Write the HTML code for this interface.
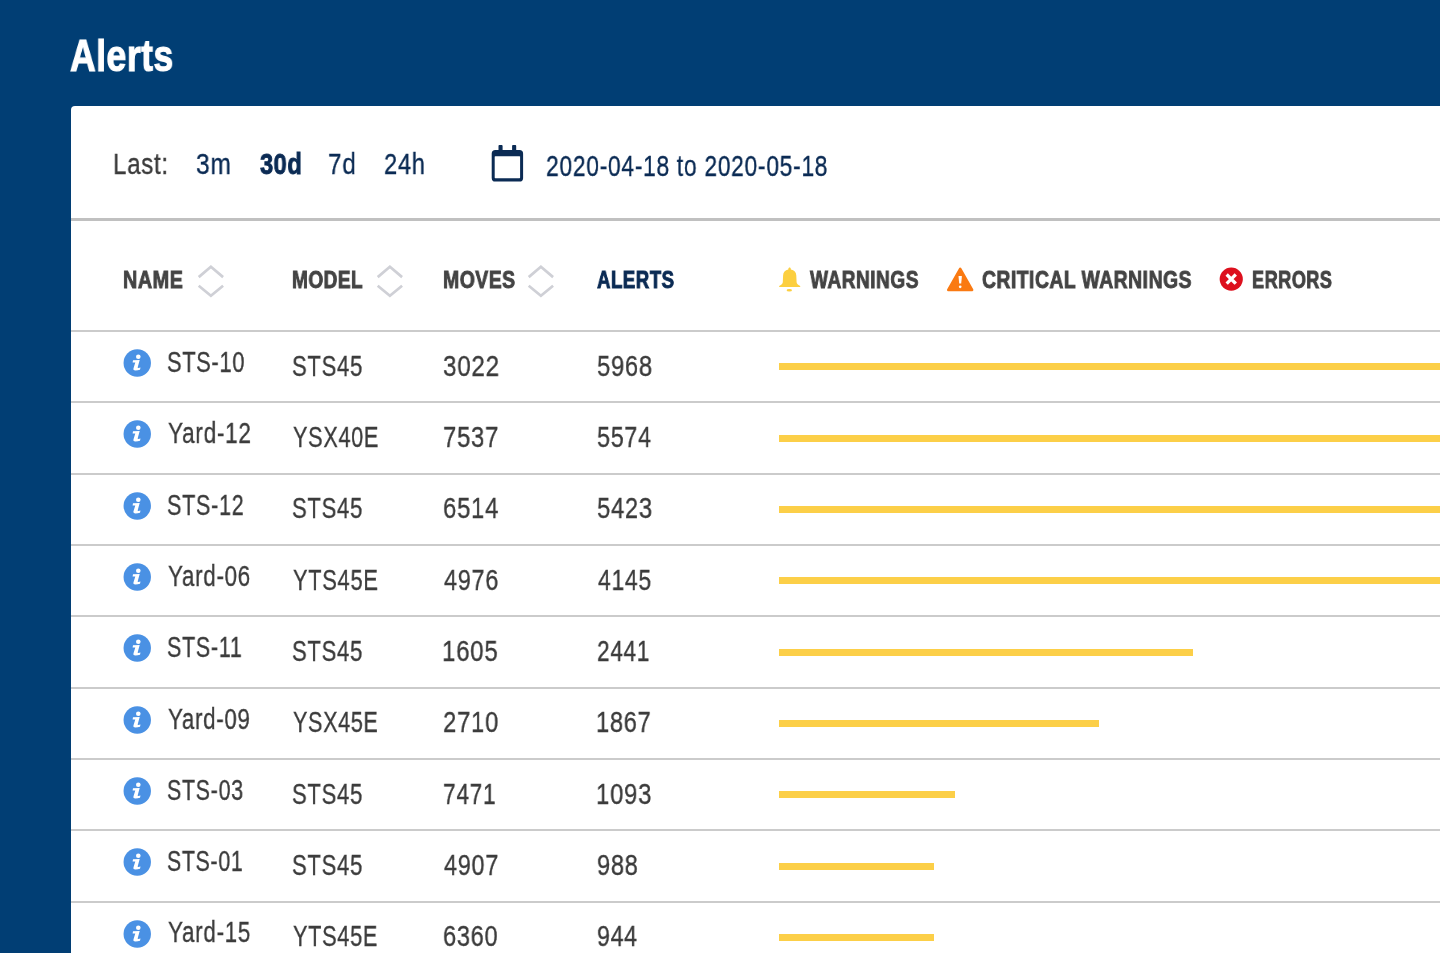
<!DOCTYPE html><html><head><meta charset="utf-8"><style>
html,body{margin:0;padding:0;}
body{width:1440px;height:953px;overflow:hidden;background:#013e74;position:relative;font-family:"Liberation Sans",sans-serif;}
.t{position:absolute;white-space:nowrap;line-height:1;transform-origin:0 0;will-change:transform;}
.ic{position:absolute;overflow:visible;}
.card{position:absolute;left:71px;top:106px;width:1400px;height:900px;background:#fff;border-radius:4px;}
.sep{position:absolute;left:71px;width:1400px;}
.bar{position:absolute;left:779px;height:7px;background:#fccf48;}
</style></head><body>
<div class="card"></div>
<div class="sep" style="top:217.5px;height:3px;background:#c0c0c0"></div>

<div class="sep" style="top:329.90px;height:2px;background:#cbcbcb"></div>
<div class="sep" style="top:401.23px;height:2px;background:#cbcbcb"></div>
<div class="sep" style="top:472.56px;height:2px;background:#cbcbcb"></div>
<div class="sep" style="top:543.89px;height:2px;background:#cbcbcb"></div>
<div class="sep" style="top:615.22px;height:2px;background:#cbcbcb"></div>
<div class="sep" style="top:686.55px;height:2px;background:#cbcbcb"></div>
<div class="sep" style="top:757.88px;height:2px;background:#cbcbcb"></div>
<div class="sep" style="top:829.21px;height:2px;background:#cbcbcb"></div>
<div class="sep" style="top:900.54px;height:2px;background:#cbcbcb"></div>
<div class="bar" style="top:363.30px;width:721px"></div>
<svg class="ic" style="left:117px;top:343.00px" width="40" height="40" viewBox="0 0 40 40"><circle cx="20.25" cy="20" r="13.7" fill="#4a91e4"/><circle cx="21.3" cy="13.7" r="2.3" fill="#fff"/><path d="M16.0,17.3 L22.7,17.0 L20.7,24.2 Q20.5,25.0 21.3,24.9 L23.5,24.6 L23.0,26.7 Q21.0,27.4 18.4,27.4 Q15.9,27.4 16.5,25.2 L18.3,19.5 L15.6,19.6 Z" fill="#fff"/></svg>
<div class="bar" style="top:434.63px;width:721px"></div>
<svg class="ic" style="left:117px;top:414.33px" width="40" height="40" viewBox="0 0 40 40"><circle cx="20.25" cy="20" r="13.7" fill="#4a91e4"/><circle cx="21.3" cy="13.7" r="2.3" fill="#fff"/><path d="M16.0,17.3 L22.7,17.0 L20.7,24.2 Q20.5,25.0 21.3,24.9 L23.5,24.6 L23.0,26.7 Q21.0,27.4 18.4,27.4 Q15.9,27.4 16.5,25.2 L18.3,19.5 L15.6,19.6 Z" fill="#fff"/></svg>
<div class="bar" style="top:505.96px;width:721px"></div>
<svg class="ic" style="left:117px;top:485.66px" width="40" height="40" viewBox="0 0 40 40"><circle cx="20.25" cy="20" r="13.7" fill="#4a91e4"/><circle cx="21.3" cy="13.7" r="2.3" fill="#fff"/><path d="M16.0,17.3 L22.7,17.0 L20.7,24.2 Q20.5,25.0 21.3,24.9 L23.5,24.6 L23.0,26.7 Q21.0,27.4 18.4,27.4 Q15.9,27.4 16.5,25.2 L18.3,19.5 L15.6,19.6 Z" fill="#fff"/></svg>
<div class="bar" style="top:577.29px;width:721px"></div>
<svg class="ic" style="left:117px;top:556.99px" width="40" height="40" viewBox="0 0 40 40"><circle cx="20.25" cy="20" r="13.7" fill="#4a91e4"/><circle cx="21.3" cy="13.7" r="2.3" fill="#fff"/><path d="M16.0,17.3 L22.7,17.0 L20.7,24.2 Q20.5,25.0 21.3,24.9 L23.5,24.6 L23.0,26.7 Q21.0,27.4 18.4,27.4 Q15.9,27.4 16.5,25.2 L18.3,19.5 L15.6,19.6 Z" fill="#fff"/></svg>
<div class="bar" style="top:648.62px;width:414px"></div>
<svg class="ic" style="left:117px;top:628.32px" width="40" height="40" viewBox="0 0 40 40"><circle cx="20.25" cy="20" r="13.7" fill="#4a91e4"/><circle cx="21.3" cy="13.7" r="2.3" fill="#fff"/><path d="M16.0,17.3 L22.7,17.0 L20.7,24.2 Q20.5,25.0 21.3,24.9 L23.5,24.6 L23.0,26.7 Q21.0,27.4 18.4,27.4 Q15.9,27.4 16.5,25.2 L18.3,19.5 L15.6,19.6 Z" fill="#fff"/></svg>
<div class="bar" style="top:719.95px;width:320px"></div>
<svg class="ic" style="left:117px;top:699.65px" width="40" height="40" viewBox="0 0 40 40"><circle cx="20.25" cy="20" r="13.7" fill="#4a91e4"/><circle cx="21.3" cy="13.7" r="2.3" fill="#fff"/><path d="M16.0,17.3 L22.7,17.0 L20.7,24.2 Q20.5,25.0 21.3,24.9 L23.5,24.6 L23.0,26.7 Q21.0,27.4 18.4,27.4 Q15.9,27.4 16.5,25.2 L18.3,19.5 L15.6,19.6 Z" fill="#fff"/></svg>
<div class="bar" style="top:791.28px;width:175.5px"></div>
<svg class="ic" style="left:117px;top:770.98px" width="40" height="40" viewBox="0 0 40 40"><circle cx="20.25" cy="20" r="13.7" fill="#4a91e4"/><circle cx="21.3" cy="13.7" r="2.3" fill="#fff"/><path d="M16.0,17.3 L22.7,17.0 L20.7,24.2 Q20.5,25.0 21.3,24.9 L23.5,24.6 L23.0,26.7 Q21.0,27.4 18.4,27.4 Q15.9,27.4 16.5,25.2 L18.3,19.5 L15.6,19.6 Z" fill="#fff"/></svg>
<div class="bar" style="top:862.61px;width:155px"></div>
<svg class="ic" style="left:117px;top:842.31px" width="40" height="40" viewBox="0 0 40 40"><circle cx="20.25" cy="20" r="13.7" fill="#4a91e4"/><circle cx="21.3" cy="13.7" r="2.3" fill="#fff"/><path d="M16.0,17.3 L22.7,17.0 L20.7,24.2 Q20.5,25.0 21.3,24.9 L23.5,24.6 L23.0,26.7 Q21.0,27.4 18.4,27.4 Q15.9,27.4 16.5,25.2 L18.3,19.5 L15.6,19.6 Z" fill="#fff"/></svg>
<div class="bar" style="top:933.94px;width:155px"></div>
<svg class="ic" style="left:117px;top:913.64px" width="40" height="40" viewBox="0 0 40 40"><circle cx="20.25" cy="20" r="13.7" fill="#4a91e4"/><circle cx="21.3" cy="13.7" r="2.3" fill="#fff"/><path d="M16.0,17.3 L22.7,17.0 L20.7,24.2 Q20.5,25.0 21.3,24.9 L23.5,24.6 L23.0,26.7 Q21.0,27.4 18.4,27.4 Q15.9,27.4 16.5,25.2 L18.3,19.5 L15.6,19.6 Z" fill="#fff"/></svg>
<svg class="ic" style="left:196.8px;top:258px" width="34" height="46" viewBox="0 0 34 46"><polyline points="1.7,19.1 13.9,8.8 26.1,19.1" fill="none" stroke="#cfd0d6" stroke-width="2.7"/><polyline points="1.7,27.7 13.9,37.8 26.1,27.7" fill="none" stroke="#cfd0d6" stroke-width="2.7"/></svg>
<svg class="ic" style="left:375.7px;top:258px" width="34" height="46" viewBox="0 0 34 46"><polyline points="1.7,19.1 13.9,8.8 26.1,19.1" fill="none" stroke="#cfd0d6" stroke-width="2.7"/><polyline points="1.7,27.7 13.9,37.8 26.1,27.7" fill="none" stroke="#cfd0d6" stroke-width="2.7"/></svg>
<svg class="ic" style="left:527.2px;top:258px" width="34" height="46" viewBox="0 0 34 46"><polyline points="1.7,19.1 13.9,8.8 26.1,19.1" fill="none" stroke="#cfd0d6" stroke-width="2.7"/><polyline points="1.7,27.7 13.9,37.8 26.1,27.7" fill="none" stroke="#cfd0d6" stroke-width="2.7"/></svg>
<svg class="ic" style="left:486px;top:140px" width="44" height="46" viewBox="0 0 44 46"><rect x="5.7" y="10.1" width="31.4" height="31.4" rx="3.6" fill="#0b2b54"/><rect x="8.7" y="16.2" width="25.4" height="22" rx="0.6" fill="#fff"/><rect x="12.5" y="5.1" width="4.1" height="7" rx="0.8" fill="#0b2b54"/><rect x="26.1" y="5.1" width="4.1" height="7" rx="0.8" fill="#0b2b54"/></svg>
<svg class="ic" style="left:772px;top:260px" width="36" height="36" viewBox="0 0 36 36"><path d="M16.3,9.5 C16.3,6.9 18.9,6.9 18.9,9.5 C22.3,10.0 24.2,12.2 24.3,15.5 L24.6,22.3 C24.8,24.2 26.5,25.3 28.2,26.0 L28.2,26.9 L7.2,26.9 L7.2,26.0 C8.9,25.3 10.6,24.2 10.8,22.3 L11.1,15.5 C11.2,12.2 13.1,10.0 16.3,9.5 Z" fill="#fccf3f"/><ellipse cx="17.3" cy="30.2" rx="2.7" ry="1.2" fill="#fccf3f"/></svg>
<svg class="ic" style="left:940px;top:260px" width="40" height="36" viewBox="0 0 40 36"><path d="M20.2,8.9 L32.1,29.9 L8.3,29.9 Z" fill="#fa7a12" stroke="#fa7a12" stroke-width="2.6" stroke-linejoin="round"/><path d="M18.5,16.2 Q18.5,15.9 18.8,15.9 L21.6,15.9 Q21.9,15.9 21.9,16.2 L21.2,23.6 L19.2,23.6 Z" fill="#fff"/><circle cx="20.2" cy="26.8" r="1.35" fill="#fff"/></svg>
<svg class="ic" style="left:1212px;top:262px" width="38" height="36" viewBox="0 0 38 36"><circle cx="19.25" cy="17.1" r="11.6" fill="#dd101e"/><path d="M15.85,13.7 L22.65,20.5 M22.65,13.7 L15.85,20.5" stroke="#fff" stroke-width="3.3" stroke-linecap="square"/></svg>
<span class="t" id="title" style="left:69.99px;top:33.68px;font-size:44.90px;transform:scaleX(0.7927);color:#ffffff;font-weight:bold;-webkit-text-stroke:1.2px #ffffff;letter-spacing:0.6px">Alerts</span>
<span class="t" id="last" style="left:113.11px;top:148.90px;font-size:29.65px;transform:scaleX(0.8116);color:#3c3c3c;font-weight:normal;-webkit-text-stroke:0.35px #3c3c3c;letter-spacing:0.9px">Last:</span>
<span class="t" id="o3m" style="left:196.03px;top:148.90px;font-size:29.65px;transform:scaleX(0.8270);color:#0b2b54;font-weight:normal;-webkit-text-stroke:0.35px #0b2b54;letter-spacing:0.9px">3m</span>
<span class="t" id="o30d" style="left:259.97px;top:148.90px;font-size:29.65px;transform:scaleX(0.7969);color:#0b2b54;font-weight:bold;-webkit-text-stroke:0.9px #0b2b54;letter-spacing:0.6px">30d</span>
<span class="t" id="o7d" style="left:328.08px;top:148.90px;font-size:29.65px;transform:scaleX(0.8184);color:#0b2b54;font-weight:normal;-webkit-text-stroke:0.35px #0b2b54;letter-spacing:0.9px">7d</span>
<span class="t" id="o24h" style="left:384.10px;top:148.90px;font-size:29.65px;transform:scaleX(0.7981);color:#0b2b54;font-weight:normal;-webkit-text-stroke:0.35px #0b2b54;letter-spacing:0.9px">24h</span>
<span class="t" id="date" style="left:546.13px;top:150.57px;font-size:29.80px;transform:scaleX(0.7671);color:#0b2b54;font-weight:normal;-webkit-text-stroke:0.35px #0b2b54;letter-spacing:0.9px">2020-04-18 to 2020-05-18</span>
<span class="t" id="hname" style="left:123.00px;top:267.89px;font-size:24.10px;transform:scaleX(0.8228);color:#444444;font-weight:bold;-webkit-text-stroke:0.9px #444444;letter-spacing:0.6px">NAME</span>
<span class="t" id="hmodel" style="left:292.03px;top:267.89px;font-size:24.10px;transform:scaleX(0.7901);color:#444444;font-weight:bold;-webkit-text-stroke:0.9px #444444;letter-spacing:0.6px">MODEL</span>
<span class="t" id="hmoves" style="left:442.99px;top:267.89px;font-size:24.10px;transform:scaleX(0.8065);color:#444444;font-weight:bold;-webkit-text-stroke:0.9px #444444;letter-spacing:0.6px">MOVES</span>
<span class="t" id="halerts" style="left:597.00px;top:267.89px;font-size:24.10px;transform:scaleX(0.7758);color:#0b2b54;font-weight:bold;-webkit-text-stroke:0.9px #0b2b54;letter-spacing:0.6px">ALERTS</span>
<span class="t" id="hwarn" style="left:809.98px;top:267.89px;font-size:24.10px;transform:scaleX(0.7929);color:#444444;font-weight:bold;-webkit-text-stroke:0.9px #444444;letter-spacing:0.6px">WARNINGS</span>
<span class="t" id="hcrit" style="left:982.03px;top:267.89px;font-size:24.10px;transform:scaleX(0.8029);color:#444444;font-weight:bold;-webkit-text-stroke:0.9px #444444;letter-spacing:0.6px">CRITICAL WARNINGS</span>
<span class="t" id="herr" style="left:1252.06px;top:267.89px;font-size:24.10px;transform:scaleX(0.7536);color:#444444;font-weight:bold;-webkit-text-stroke:0.9px #444444;letter-spacing:0.6px">ERRORS</span>
<span class="t" id="n0" style="left:167.12px;top:347.85px;font-size:29.00px;transform:scaleX(0.7529);color:#3c3c3c;font-weight:normal;-webkit-text-stroke:0.35px #3c3c3c;letter-spacing:0.9px">STS-10</span>
<span class="t" id="m0" style="left:292.13px;top:350.72px;font-size:29.50px;transform:scaleX(0.7490);color:#3c3c3c;font-weight:normal;-webkit-text-stroke:0.35px #3c3c3c;letter-spacing:0.9px">STS45</span>
<span class="t" id="v0" style="left:443.04px;top:350.55px;font-size:29.70px;transform:scaleX(0.8158);color:#3c3c3c;font-weight:normal;-webkit-text-stroke:0.35px #3c3c3c;letter-spacing:0.9px">3022</span>
<span class="t" id="a0" style="left:597.08px;top:350.55px;font-size:29.70px;transform:scaleX(0.8016);color:#3c3c3c;font-weight:normal;-webkit-text-stroke:0.35px #3c3c3c;letter-spacing:0.9px">5968</span>
<span class="t" id="n1" style="left:167.80px;top:419.18px;font-size:29.00px;transform:scaleX(0.7791);color:#3c3c3c;font-weight:normal;-webkit-text-stroke:0.35px #3c3c3c;letter-spacing:0.9px">Yard-12</span>
<span class="t" id="m1" style="left:292.78px;top:422.05px;font-size:29.50px;transform:scaleX(0.7360);color:#3c3c3c;font-weight:normal;-webkit-text-stroke:0.35px #3c3c3c;letter-spacing:0.9px">YSX40E</span>
<span class="t" id="v1" style="left:443.06px;top:421.88px;font-size:29.70px;transform:scaleX(0.8046);color:#3c3c3c;font-weight:normal;-webkit-text-stroke:0.35px #3c3c3c;letter-spacing:0.9px">7537</span>
<span class="t" id="a1" style="left:597.07px;top:421.88px;font-size:29.70px;transform:scaleX(0.7862);color:#3c3c3c;font-weight:normal;-webkit-text-stroke:0.35px #3c3c3c;letter-spacing:0.9px">5574</span>
<span class="t" id="n2" style="left:167.02px;top:490.51px;font-size:29.00px;transform:scaleX(0.7457);color:#3c3c3c;font-weight:normal;-webkit-text-stroke:0.35px #3c3c3c;letter-spacing:0.9px">STS-12</span>
<span class="t" id="m2" style="left:292.13px;top:493.38px;font-size:29.50px;transform:scaleX(0.7490);color:#3c3c3c;font-weight:normal;-webkit-text-stroke:0.35px #3c3c3c;letter-spacing:0.9px">STS45</span>
<span class="t" id="v2" style="left:443.05px;top:493.21px;font-size:29.70px;transform:scaleX(0.8054);color:#3c3c3c;font-weight:normal;-webkit-text-stroke:0.35px #3c3c3c;letter-spacing:0.9px">6514</span>
<span class="t" id="a2" style="left:597.08px;top:493.21px;font-size:29.70px;transform:scaleX(0.8016);color:#3c3c3c;font-weight:normal;-webkit-text-stroke:0.35px #3c3c3c;letter-spacing:0.9px">5423</span>
<span class="t" id="n3" style="left:167.57px;top:561.84px;font-size:29.00px;transform:scaleX(0.7722);color:#3c3c3c;font-weight:normal;-webkit-text-stroke:0.35px #3c3c3c;letter-spacing:0.9px">Yard-06</span>
<span class="t" id="m3" style="left:292.52px;top:564.71px;font-size:29.50px;transform:scaleX(0.7415);color:#3c3c3c;font-weight:normal;-webkit-text-stroke:0.35px #3c3c3c;letter-spacing:0.9px">YTS45E</span>
<span class="t" id="v3" style="left:443.98px;top:564.54px;font-size:29.70px;transform:scaleX(0.7905);color:#3c3c3c;font-weight:normal;-webkit-text-stroke:0.35px #3c3c3c;letter-spacing:0.9px">4976</span>
<span class="t" id="a3" style="left:598.02px;top:564.54px;font-size:29.70px;transform:scaleX(0.7727);color:#3c3c3c;font-weight:normal;-webkit-text-stroke:0.35px #3c3c3c;letter-spacing:0.9px">4145</span>
<span class="t" id="n4" style="left:167.14px;top:633.17px;font-size:29.00px;transform:scaleX(0.7431);color:#3c3c3c;font-weight:normal;-webkit-text-stroke:0.35px #3c3c3c;letter-spacing:0.9px">STS-11</span>
<span class="t" id="m4" style="left:292.13px;top:636.04px;font-size:29.50px;transform:scaleX(0.7490);color:#3c3c3c;font-weight:normal;-webkit-text-stroke:0.35px #3c3c3c;letter-spacing:0.9px">STS45</span>
<span class="t" id="v4" style="left:442.09px;top:635.87px;font-size:29.70px;transform:scaleX(0.8106);color:#3c3c3c;font-weight:normal;-webkit-text-stroke:0.35px #3c3c3c;letter-spacing:0.9px">1605</span>
<span class="t" id="a4" style="left:597.13px;top:635.87px;font-size:29.70px;transform:scaleX(0.7611);color:#3c3c3c;font-weight:normal;-webkit-text-stroke:0.35px #3c3c3c;letter-spacing:0.9px">2441</span>
<span class="t" id="n5" style="left:167.58px;top:704.50px;font-size:29.00px;transform:scaleX(0.7693);color:#3c3c3c;font-weight:normal;-webkit-text-stroke:0.35px #3c3c3c;letter-spacing:0.9px">Yard-09</span>
<span class="t" id="m5" style="left:292.52px;top:707.37px;font-size:29.50px;transform:scaleX(0.7314);color:#3c3c3c;font-weight:normal;-webkit-text-stroke:0.35px #3c3c3c;letter-spacing:0.9px">YSX45E</span>
<span class="t" id="v5" style="left:443.06px;top:707.20px;font-size:29.70px;transform:scaleX(0.8049);color:#3c3c3c;font-weight:normal;-webkit-text-stroke:0.35px #3c3c3c;letter-spacing:0.9px">2710</span>
<span class="t" id="a5" style="left:596.13px;top:707.20px;font-size:29.70px;transform:scaleX(0.7958);color:#3c3c3c;font-weight:normal;-webkit-text-stroke:0.35px #3c3c3c;letter-spacing:0.9px">1867</span>
<span class="t" id="n6" style="left:167.14px;top:775.83px;font-size:29.00px;transform:scaleX(0.7399);color:#3c3c3c;font-weight:normal;-webkit-text-stroke:0.35px #3c3c3c;letter-spacing:0.9px">STS-03</span>
<span class="t" id="m6" style="left:292.13px;top:778.70px;font-size:29.50px;transform:scaleX(0.7490);color:#3c3c3c;font-weight:normal;-webkit-text-stroke:0.35px #3c3c3c;letter-spacing:0.9px">STS45</span>
<span class="t" id="v6" style="left:443.08px;top:778.53px;font-size:29.70px;transform:scaleX(0.7660);color:#3c3c3c;font-weight:normal;-webkit-text-stroke:0.35px #3c3c3c;letter-spacing:0.9px">7471</span>
<span class="t" id="a6" style="left:596.12px;top:778.53px;font-size:29.70px;transform:scaleX(0.8057);color:#3c3c3c;font-weight:normal;-webkit-text-stroke:0.35px #3c3c3c;letter-spacing:0.9px">1093</span>
<span class="t" id="n7" style="left:167.14px;top:847.16px;font-size:29.00px;transform:scaleX(0.7364);color:#3c3c3c;font-weight:normal;-webkit-text-stroke:0.35px #3c3c3c;letter-spacing:0.9px">STS-01</span>
<span class="t" id="m7" style="left:292.13px;top:850.03px;font-size:29.50px;transform:scaleX(0.7490);color:#3c3c3c;font-weight:normal;-webkit-text-stroke:0.35px #3c3c3c;letter-spacing:0.9px">STS45</span>
<span class="t" id="v7" style="left:443.99px;top:849.86px;font-size:29.70px;transform:scaleX(0.7900);color:#3c3c3c;font-weight:normal;-webkit-text-stroke:0.35px #3c3c3c;letter-spacing:0.9px">4907</span>
<span class="t" id="a7" style="left:597.09px;top:849.86px;font-size:29.70px;transform:scaleX(0.7958);color:#3c3c3c;font-weight:normal;-webkit-text-stroke:0.35px #3c3c3c;letter-spacing:0.9px">988</span>
<span class="t" id="n8" style="left:167.58px;top:918.49px;font-size:29.00px;transform:scaleX(0.7738);color:#3c3c3c;font-weight:normal;-webkit-text-stroke:0.35px #3c3c3c;letter-spacing:0.9px">Yard-15</span>
<span class="t" id="m8" style="left:292.53px;top:921.36px;font-size:29.50px;transform:scaleX(0.7371);color:#3c3c3c;font-weight:normal;-webkit-text-stroke:0.35px #3c3c3c;letter-spacing:0.9px">YTS45E</span>
<span class="t" id="v8" style="left:443.07px;top:921.19px;font-size:29.70px;transform:scaleX(0.7944);color:#3c3c3c;font-weight:normal;-webkit-text-stroke:0.35px #3c3c3c;letter-spacing:0.9px">6360</span>
<span class="t" id="a8" style="left:597.12px;top:921.19px;font-size:29.70px;transform:scaleX(0.7799);color:#3c3c3c;font-weight:normal;-webkit-text-stroke:0.35px #3c3c3c;letter-spacing:0.9px">944</span>
</body></html>
